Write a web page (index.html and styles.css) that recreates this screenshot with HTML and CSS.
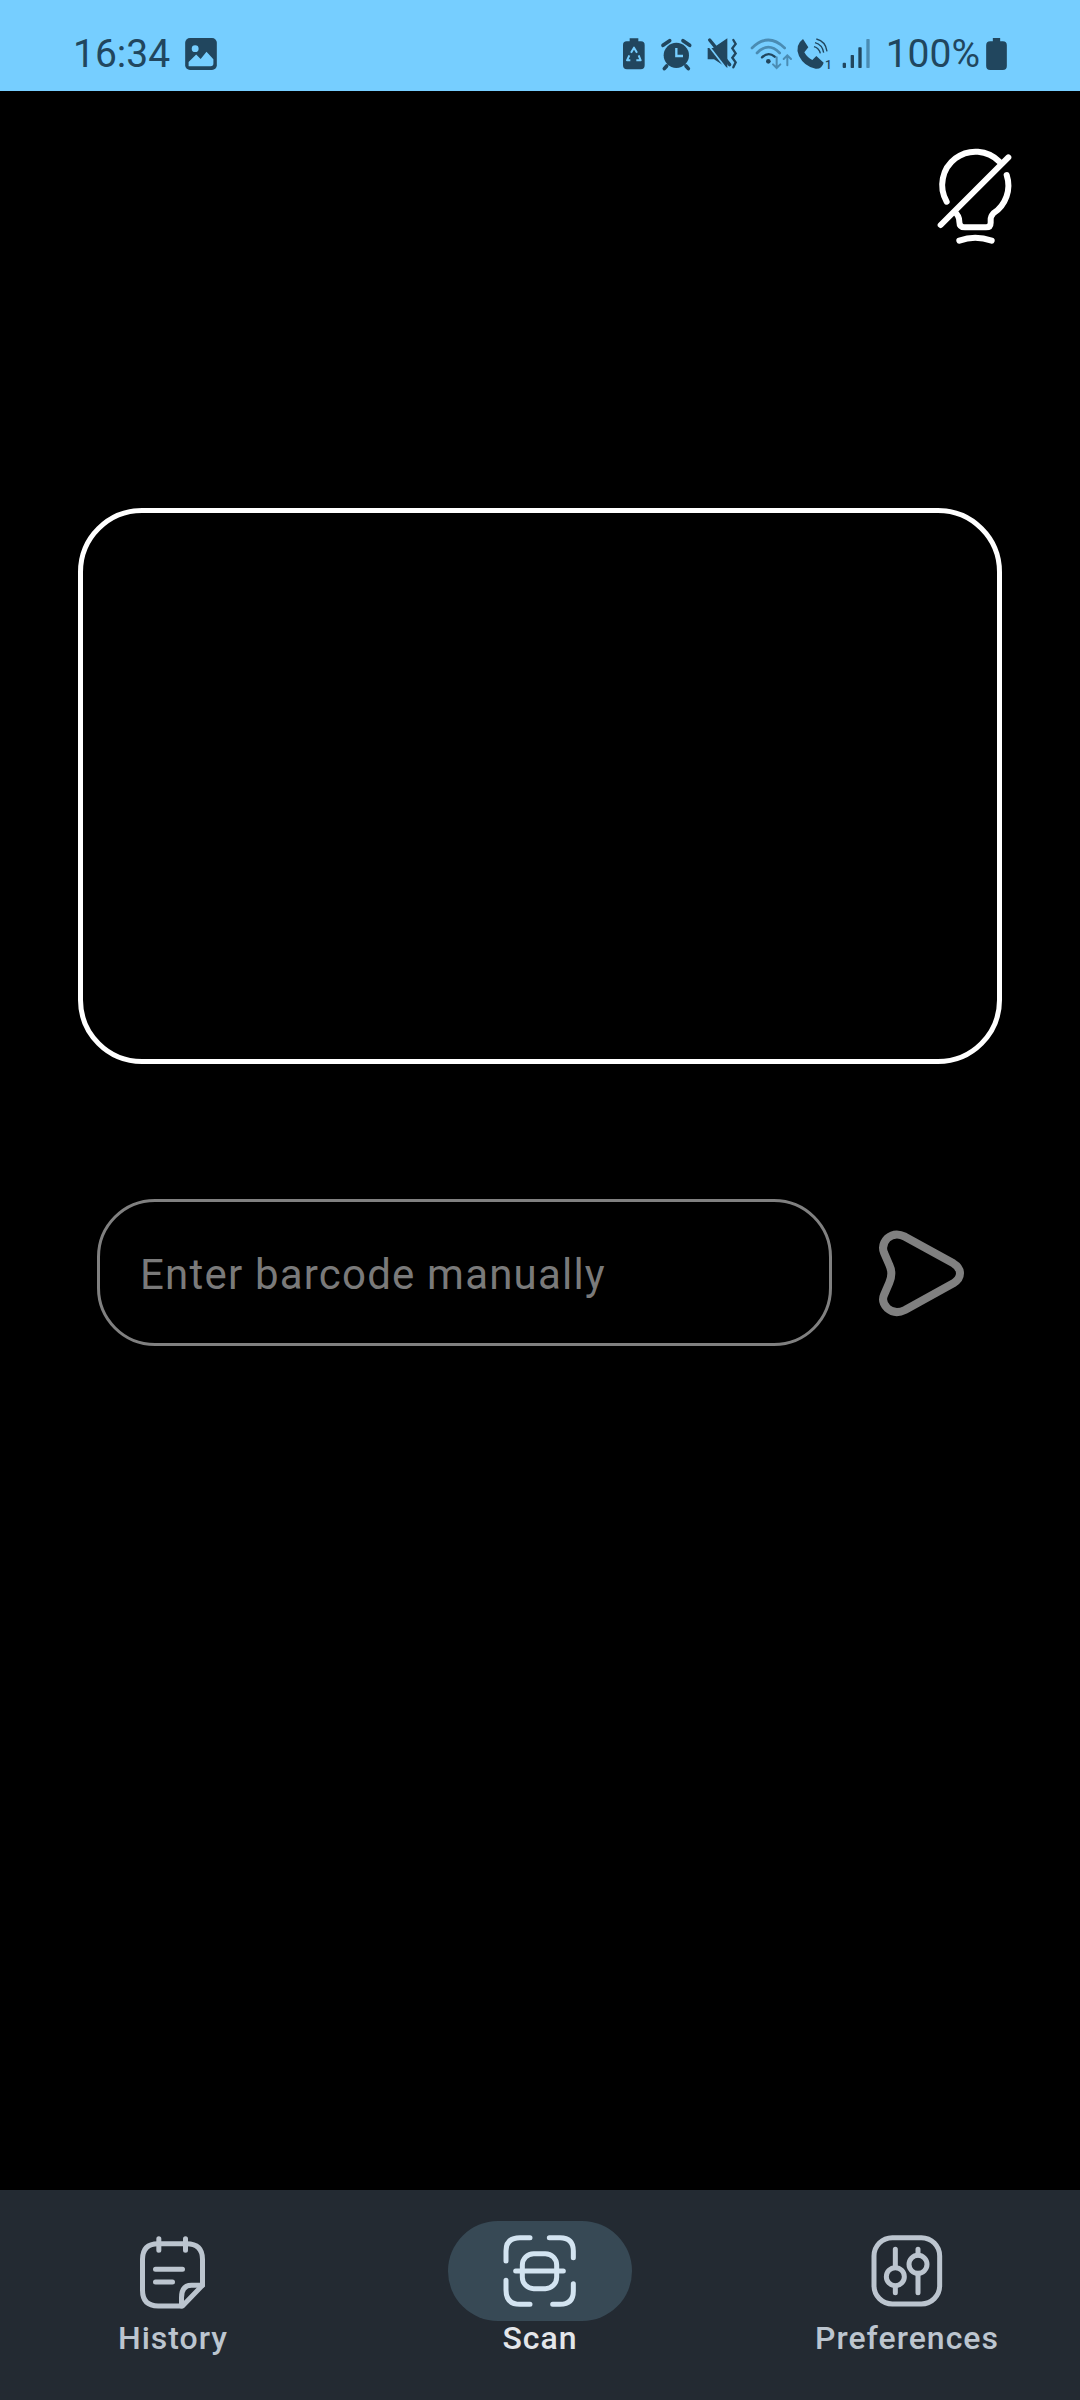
FILE: index.html
```html
<!DOCTYPE html>
<html lang="en">
<head>
    <meta charset="UTF-8">
    <meta name="viewport" content="width=device-width, initial-scale=1.0">
    <title>Scan</title>
    <link rel="stylesheet" href="styles.css">
</head>
<body>
    <div class="status-bar">
        <span class="status-time">16:34</span>
        <svg class="status-image" viewBox="558 116 92 93">
            <rect x="558" y="116" width="92" height="93" rx="14" fill="#21465e"/>
            <circle cx="587" cy="147" r="10" fill="#76ceff"/>
            <path d="M568 198 V186 L590 164 L603 177 L620 156 L640 178 V190 Q640 198 632 198 Z" fill="#76ceff"/>
        </svg>
        <svg class="status-icons" viewBox="72 51 744 105">
            <!-- battery saver -->
            <path d="M92 55 H118 V64 H126 Q137 64 137 75 V136 Q137 148 125 148 H84 Q72 148 72 136 V75 Q72 64 83 64 H92 Z" fill="#21465e"/>
            <path d="M96 98 L105 83 L114 98 M119 106 L125 121 H112 M94 121 H84 L91 106" fill="none" stroke="#76ceff" stroke-width="6" stroke-linejoin="round"/>
            <!-- alarm -->
            <circle cx="232" cy="106" r="38" fill="#21465e"/>
            <path d="M192 76 L212 62 M272 76 L252 62 M203 138 L196 146 M261 138 L268 146" stroke="#21465e" stroke-width="11" stroke-linecap="round"/>
            <path d="M232 84 V108 H252" fill="none" stroke="#76ceff" stroke-width="7"/>
            <!-- muted sound -->
            <path d="M326 84 H342 L385 55 V144 L345 118 H326 Z" fill="#21465e"/>
            <path d="M322 68 L382 146" stroke="#76ceff" stroke-width="5"/>
            <path d="M332 60 L392 134" stroke="#21465e" stroke-width="10" stroke-linecap="round"/>
            <path d="M403 60 L410 72 L400 85 L410 100 L400 113 L410 127 L403 142" fill="none" stroke="#21465e" stroke-width="7" stroke-linecap="round"/>
            <!-- wifi with data arrows -->
            <g fill="none" stroke="#4a8cb3" stroke-width="8" stroke-linecap="round">
                <path d="M459 84 Q508 36 557 84"/>
                <path d="M474 99 Q508 64 542 99"/>
                <path d="M533 112 V144 M522 133 L533 144 L544 133" stroke-width="6"/>
                <path d="M565 136 V106 M554 117 L565 106 L576 117" stroke-width="6"/>
            </g>
            <path d="M489 112 Q508 94 527 110" fill="none" stroke="#21465e" stroke-width="7" stroke-linecap="round"/>
            <circle cx="508" cy="124" r="7" fill="#21465e"/>
            <!-- call -->
            <path d="M612 57 L628 82 L616 97 Q624 112 640 120 L652 108 L674 128 Q668 148 650 146 Q616 140 600 108 Q586 76 612 57 Z" fill="#21465e"/>
            <g fill="none" stroke="#21465e" stroke-width="4">
                <path d="M645 80 Q660 84 664 100"/>
                <path d="M648 68 Q670 74 674 98"/>
                <path d="M652 57 Q680 64 684 94"/>
            </g>
            <text x="678" y="146" class="status-sim">1</text>
            <!-- signal -->
            <rect x="731" y="128" width="10" height="16" rx="3" fill="#21465e"/>
            <rect x="755" y="105" width="10" height="39" rx="2" fill="#21465e"/>
            <rect x="778" y="82" width="10" height="62" rx="2" fill="#21465e"/>
            <rect x="802" y="57" width="10" height="87" rx="2" fill="#4a8cb3"/>
        </svg>
        <span class="status-level">100%</span>
        <svg class="status-battery" viewBox="1160 52 62 96">
            <path d="M1180 52 H1202 V62 H1210 Q1222 62 1222 74 V136 Q1222 148 1210 148 H1172 Q1160 148 1160 136 V74 Q1160 62 1172 62 H1180 Z" fill="#21465e"/>
        </svg>
    </div>

    <main class="scanner">
        <button class="flash-button" type="button" aria-label="Flash off">
            <svg class="flash-icon" viewBox="99 42 249 306">
                <path d="M140 215 A100 100 0 0 1 298 95"/>
                <path d="M320 135 A100 100 0 0 1 280 250 Q272 258 272 270 V278 Q272 292 258 292 H195 Q178 292 178 275 Q178 258 165 247"/>
                <path d="M122 285 L325 82"/>
                <path d="M178 332 Q225 315 275 332"/>
            </svg>
        </button>

        <div class="scan-frame"></div>

        <form class="manual-entry">
            <div class="manual-input">Enter barcode manually</div>
            <button class="send-button" type="button" aria-label="Send">
                <svg class="send-icon" viewBox="291 141 270 279">
                    <path d="M375 170 L520 250 Q540 262 540 280 Q540 298 520 310 L375 390 Q345 405 322 385 Q303 365 312 345 L328 308 Q340 280 328 255 L312 218 Q303 195 322 175 Q345 155 375 170 Z"/>
                </svg>
            </button>
        </form>
    </main>

    <nav class="bottom-nav">
        <div class="nav-item">
            <div class="nav-icon">
                <svg class="nav-svg history-icon" viewBox="130 120 230 240">
                    <path d="M278 345 H205 Q158 345 158 298 V205 Q158 158 205 158 H290 Q338 158 338 205 V283 Z"/>
                    <path d="M338 283 H305 Q275 283 275 320 V345"/>
                    <path d="M207 143 V178 M287 143 V178"/>
                    <path d="M197 235 H278 M197 273 H248"/>
                </svg>
            </div>
            <span class="nav-label">History</span>
        </div>
        <div class="nav-item active">
            <div class="nav-icon">
                <svg class="nav-svg scan-icon" viewBox="210 95 240 240">
                    <path d="M300 115 H270 Q228 115 228 155 V185"/>
                    <path d="M358 115 H390 Q430 115 430 155 V175"/>
                    <path d="M228 243 V272 Q228 315 270 315 H300"/>
                    <path d="M430 253 V275 Q430 315 390 315 H368"/>
                    <rect x="277" y="163" width="103" height="105" rx="34"/>
                    <path d="M257 215 H400"/>
                </svg>
            </div>
            <span class="nav-label">Scan</span>
        </div>
        <div class="nav-item">
            <div class="nav-icon">
                <svg class="nav-svg prefs-icon" viewBox="200 95 240 240">
                    <rect x="221" y="115" width="197" height="199" rx="55"/>
                    <path d="M285 150 V203 M285 261 V280"/>
                    <circle cx="285" cy="232" r="27"/>
                    <path d="M353 150 V167 M353 223 V280"/>
                    <circle cx="353" cy="195" r="27"/>
                </svg>
            </div>
            <span class="nav-label">Preferences</span>
        </div>
    </nav>
</body>
</html>
```

FILE: styles.css
```css
body {
    font-family: Roboto, "Noto Sans", sans-serif;
    background: #000;
    display: flex;
    flex-direction: column;
    height: 100vh;
    margin: 0;
}
button {
    padding: 0;
    border: none;
    background: none;
}

/* status bar */
.status-bar {
    box-sizing: border-box;
    display: flex;
    align-items: center;
    flex: none;
    height: 91px;
    padding: 17px 73px 0;
    background: #76ceff;
    color: #21465e;
}
.status-time {
    font-size: 39px;
    margin-right: 15px;
}
.status-image {
    width: 32px;
    height: 32px;
}
.status-icons {
    width: 248px;
    height: 35px;
    margin-left: auto;
}
.status-sim {
    font-size: 36px;
    font-weight: 500;
    fill: #21465e;
}
.status-level {
    font-size: 39px;
    margin-left: 15px;
}
.status-battery {
    width: 21px;
    height: 32px;
    margin-left: 6px;
}

/* scanner */
.scanner {
    flex: 1;
    display: flex;
    flex-direction: column;
}
.flash-button {
    align-self: flex-end;
    display: flex;
    margin: 53px 64px 0 0;
}
.flash-icon {
    width: 83px;
    height: 102px;
    fill: none;
    stroke: #fff;
    stroke-width: 18;
    stroke-linecap: round;
    stroke-linejoin: round;
}
.scan-frame {
    box-sizing: border-box;
    width: 924px;
    height: 556px;
    margin: 262px 0 0 78px;
    border: 5px solid #fff;
    border-radius: 64px;
}
.manual-entry {
    display: flex;
    align-items: center;
    margin: 135px 0 0 97px;
}
.manual-input {
    box-sizing: border-box;
    display: flex;
    align-items: center;
    width: 735px;
    height: 147px;
    padding: 3px 40px 0;
    border: 3px solid #808080;
    border-radius: 58px;
    color: #7a7a7a;
    font-size: 42px;
    letter-spacing: 1.2px;
}
.send-button {
    display: flex;
    margin: 2px 0 0 45px;
}
.send-icon {
    width: 90px;
    height: 93px;
    fill: none;
    stroke: #808080;
    stroke-width: 24;
    stroke-linejoin: round;
}

/* bottom navigation */
.bottom-nav {
    display: flex;
    justify-content: space-between;
    flex: none;
    height: 179px;
    padding: 31px 81px 0;
    background: #232a32;
}
.nav-item {
    display: flex;
    flex-direction: column;
    align-items: center;
    width: 184px;
    color: #bcc5cf;
    font-size: 32px;
    font-weight: 500;
    letter-spacing: 1px;
}
.nav-item.active {
    color: #e3e6ea;
}
.nav-icon {
    display: flex;
    align-items: center;
    justify-content: center;
    width: 184px;
    height: 100px;
    border-radius: 50px;
}
.active .nav-icon {
    background: #374955;
}
.nav-svg {
    width: 80px;
    height: 80px;
    fill: none;
    stroke: #bcc5cf;
    stroke-width: 15;
    stroke-linecap: round;
    stroke-linejoin: round;
}
.history-icon {
    width: 77px;
    margin-left: -3px;
}
.scan-icon {
    stroke: #d3e4f1;
}
.nav-label {
    margin-top: -2px;
    line-height: 38px;
}
```
